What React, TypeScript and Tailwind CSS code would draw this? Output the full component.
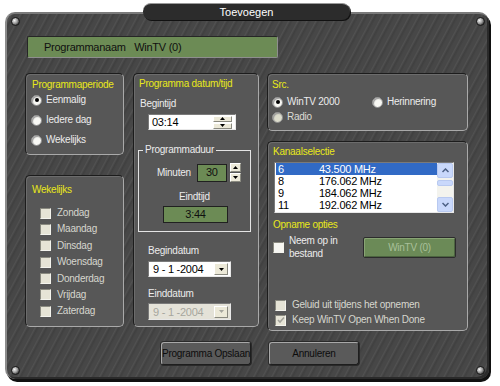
import type { ReactNode } from 'react';

const panel =
  'rounded-[5px] border border-t-[#1c1c1c] border-l-[#1c1c1c] border-r-[#a9a9a9] border-b-[#a9a9a9] bg-[#575757] shadow-[inset_1px_1px_0_#6c6c6c]';

const label = 'text-[#ececec] leading-[12px] whitespace-nowrap';
const title = 'text-[#e9e91a] leading-[12px] whitespace-nowrap';

function Screw({ className }: { className: string }) {
  return (
    <span
      className={`absolute h-[9px] w-[9px] rounded-full border border-[#1a1a1a] bg-[radial-gradient(circle_at_35%_35%,#f4f4f4_0px,#9a9a9a_3px,#3a3a3a_5px)] ${className}`}
    />
  );
}

function Radio({ text, checked, disabled }: { text: string; checked?: boolean; disabled?: boolean }) {
  return (
    <div className="flex h-[12px] items-center gap-[4px]">
      <span
        className={`flex h-[11px] w-[11px] items-center justify-center rounded-full border border-[#8e8e8e] shadow-[inset_1px_1px_1px_#9a9a9a] ${
          disabled ? 'bg-[#dcdccc]' : 'bg-[#f8f8f4]'
        }`}
      >
        {checked ? <span className="h-[4px] w-[4px] rounded-full bg-black" /> : null}
      </span>
      <span className={disabled ? 'leading-[12px] text-[#dcdcd4]' : label}>{text}</span>
    </div>
  );
}

function Check({ text, checked, disabled }: { text: ReactNode; checked?: boolean; disabled?: boolean }) {
  return (
    <div className="flex h-[12px] items-center gap-[6px]">
      <span className="flex h-[11px] w-[11px] shrink-0 items-center justify-center border border-t-[#8a8a80] border-l-[#8a8a80] border-r-[#f4f4ee] border-b-[#f4f4ee] bg-[#e6e4d6]">
        {checked ? (
          <svg width="8" height="8" viewBox="0 0 8 8">
            <path d="M1 4 L3 6 L7 1.5" fill="none" stroke="#a2a29a" strokeWidth="1.6" />
          </svg>
        ) : null}
      </span>
      <span className={`leading-[12px] whitespace-nowrap ${disabled ? 'text-[#d6d6ce]' : 'text-[#ececec]'}`}>
        {text}
      </span>
    </div>
  );
}

function Tri({ up, color = '#000' }: { up?: boolean; color?: string }) {
  return (
    <svg width="5" height="3" viewBox="0 0 5 3">
      <path d={up ? 'M0 3 L2.5 0 L5 3 Z' : 'M0 0 L5 0 L2.5 3 Z'} fill={color} />
    </svg>
  );
}

function SpinPair({ h }: { h: number }) {
  const btn =
    'flex flex-1 items-center justify-center border border-t-[#ffffff] border-l-[#ffffff] border-r-[#8a8a80] border-b-[#8a8a80] bg-[#ece9d8]';
  return (
    <div className="flex w-[11px] flex-col gap-[1px]" style={{ height: h }}>
      <span className={btn}>
        <Tri up />
      </span>
      <span className={btn}>
        <Tri />
      </span>
    </div>
  );
}

function Dropdown({ value, disabled, h }: { value: string; disabled?: boolean; h: string }) {
  return (
    <div
      className={`ml-[14px] flex w-[83px] items-center border border-t-[#7a7a7a] border-l-[#7a7a7a] border-r-[#e8e8e8] border-b-[#e8e8e8] pl-[4px] pr-[2px] ${h} ${
        disabled ? 'bg-[#e4e2d8] text-[#a6a69e]' : 'bg-white text-black'
      }`}
    >
      <span className="flex-1 text-[11px] leading-[12px]">{value}</span>
      <span className="flex h-[12px] w-[14px] items-center justify-center border border-t-[#ffffff] border-l-[#ffffff] border-r-[#8a8a80] border-b-[#8a8a80] bg-[#ece9d8]">
        <Tri color={disabled ? '#a6a69e' : '#000'} />
      </span>
    </div>
  );
}

const channels = [
  ['6', '43.500 MHz'],
  ['8', '176.062 MHz'],
  ['9', '184.062 MHz'],
  ['11', '192.062 MHz'],
];

const days = ['Zondag', 'Maandag', 'Dinsdag', 'Woensdag', 'Donderdag', 'Vrijdag', 'Zaterdag'];

export default function App() {
  return (
    <div className="relative h-[386px] w-[500px] overflow-hidden bg-white pl-[5px] pt-[12px] font-['Liberation_Sans',Arial,sans-serif] text-[10px] tracking-[-0.25px]">
      <div className="relative h-[367px] w-[484px] rounded-[10px] border-l-2 border-t-2 border-l-[#8c8c8c] border-t-[#7a7a7a] bg-[#464646] bg-[repeating-linear-gradient(118deg,#474747_0px,#474747_3px,#515151_4px,#404040_6px,#464646_8px)] pl-[18px] pt-[22px] shadow-[2px_3px_0_#111,inset_-2px_-2px_0_#2a2a2a]">
        <Screw className="left-[4px] top-[3px]" />
        <Screw className="left-[469px] top-[3px]" />
        <Screw className="left-[4px] top-[352px]" />
        <Screw className="left-[469px] top-[352px]" />

        {/* naam */}
        <div className="ml-[2px] flex h-[22px] w-[251px] items-center rounded-[2px] border border-t-[#262626] border-l-[#262626] border-r-[#8e8e8e] border-b-[#8e8e8e] bg-[#6c8b55] pl-[16px] text-[11px] text-[#101010]">
          Programmanaam&nbsp;&nbsp;&nbsp;WinTV (0)
        </div>

        <div className="mt-[15px] flex items-start">
          {/* links */}
          <div className="flex w-[99px] flex-col gap-[20px]">
            <div className={`${panel} h-[82px] pl-[5px] pt-[5px]`}>
              <div className={`${title} ml-[1px]`}>Programmaperiode</div>
              <div className="mt-[3px] flex flex-col gap-[8px]">
                <Radio text="Eenmalig" checked />
                <Radio text="Iedere dag" />
                <Radio text="Wekelijks" />
              </div>
            </div>
            <div className={`${panel} h-[152px] pl-[6px] pt-[8px]`}>
              <div className={title}>Wekelijks</div>
              <div className="ml-[8px] mt-[11px] flex flex-col gap-[4.4px]">
                {days.map((d) => (
                  <Check key={d} text={d} disabled />
                ))}
              </div>
            </div>
          </div>

          {/* midden */}
          <div className={`${panel} ml-[9px] h-[254px] w-[126px] pt-[4px]`}>
            <div className={`${title} ml-[5px]`}>Programma datum/tijd</div>
            <div className={`${label} ml-[6px] mt-[8px]`}>Begintijd</div>
            <div className="ml-[14px] mt-[4px] flex h-[16px] w-[88px] items-center border border-t-[#7a7a7a] border-l-[#7a7a7a] border-r-[#e8e8e8] border-b-[#e8e8e8] bg-white pl-[3px] pr-[3px]">
              <span className="flex-1 text-[11px] leading-[12px] text-black">03:14</span>
              <div className="flex h-[13px] w-[19px] flex-col gap-[1px]">
                <span className="flex flex-1 items-center justify-center border border-t-white border-l-white border-r-[#8a8a80] border-b-[#8a8a80] bg-[#ece9d8]">
                  <Tri up />
                </span>
                <span className="flex flex-1 items-center justify-center border border-t-white border-l-white border-r-[#8a8a80] border-b-[#8a8a80] bg-[#ece9d8]">
                  <Tri />
                </span>
              </div>
            </div>

            <fieldset className="ml-[4px] mt-[14px] h-[88px] w-[113px] border border-[#e4e4e4]">
              <legend className="ml-[4px] px-[2px] leading-[12px] text-[#ececec]">Programmaduur</legend>
              <div className="ml-[18px] mt-[7px] flex items-center">
                <span className={label}>Minuten</span>
                <span className="ml-[6px] flex h-[18px] w-[30px] items-center justify-center border border-[#202020] bg-[#6c8b55] text-[11px] text-[#101010]">
                  30
                </span>
                <span className="ml-[3px]">
                  <SpinPair h={19} />
                </span>
              </div>
              <div className={`${label} mt-[9px] text-center`}>Eindtijd</div>
              <div className="ml-[24px] mt-[3px] flex h-[17px] w-[65px] items-center justify-center border border-[#202020] bg-[#6c8b55] text-[11px] text-[#101010]">
                3:44
              </div>
            </fieldset>

            <div className={`${label} ml-[14px] mt-[13px]`}>Begindatum</div>
            <div className="mt-[4px]">
              <Dropdown value="9 - 1 -2004" h="h-[16px]" />
            </div>
            <div className={`${label} ml-[14px] mt-[11px]`}>Einddatum</div>
            <div className="mt-[3px]">
              <Dropdown value="9 - 1 -2004" h="h-[17px]" disabled />
            </div>
          </div>

          {/* rechts */}
          <div className="ml-[8px] flex w-[201px] flex-col gap-[10px]">
            <div className={`${panel} h-[58px] pl-[4px] pt-[5px]`}>
              <div className={`${title} ml-[0px]`}>Src.</div>
              <div className="mt-[5px] flex">
                <div className="w-[100px]">
                  <Radio text="WinTV 2000" checked />
                </div>
                <Radio text="Herinnering" />
              </div>
              <div className="mt-[3px]">
                <Radio text="Radio" disabled />
              </div>
            </div>

            <div className={`${panel} flex h-[190px] flex-col pl-[5px] pt-[4px]`}>
              <div className={title}>Kanaalselectie</div>
              <div className="ml-[1px] mt-[4px] flex h-[51px] w-[180px] border border-t-[#7a7a7a] border-l-[#7a7a7a] border-r-[#e8e8e8] border-b-[#e8e8e8] bg-white">
                <div className="flex-1 pl-[1px] text-[11px] text-black">
                  {channels.map(([n, f], i) => (
                    <div
                      key={n}
                      className={`flex h-[12px] items-center leading-[12px] ${
                        i === 0 ? 'bg-[#316ac5] text-white' : ''
                      }`}
                    >
                      <span className="w-[43px] pl-[2px]">{n}</span>
                      <span>{f}</span>
                    </div>
                  ))}
                </div>
                <div className="flex w-[16px] flex-col bg-[#f3f3ee]">
                  <span className="flex h-[15px] items-center justify-center rounded-[2px] border border-[#b8c9f0] bg-[#c9d8fb]">
                    <svg width="7" height="5" viewBox="0 0 7 5">
                      <path d="M0.5 4 L3.5 1 L6.5 4" fill="none" stroke="#4d6185" strokeWidth="1.5" />
                    </svg>
                  </span>
                  <span className="mt-[2px] h-[6px] rounded-[2px] border border-[#b8c9f0] bg-[#c9d8fb]" />
                  <span className="flex-1" />
                  <span className="flex h-[15px] items-center justify-center rounded-[2px] border border-[#b8c9f0] bg-[#c9d8fb]">
                    <svg width="7" height="5" viewBox="0 0 7 5">
                      <path d="M0.5 1 L3.5 4 L6.5 1" fill="none" stroke="#4d6185" strokeWidth="1.5" />
                    </svg>
                  </span>
                </div>
              </div>

              <div className={`${title} mt-[6px]`}>Opname opties</div>
              <div className="mt-[3px] flex items-start">
                <div className="mt-[8px] flex h-[11px] w-[11px] border border-t-[#8a8a80] border-l-[#8a8a80] border-r-[#f4f4ee] border-b-[#f4f4ee] bg-[#f6f6f2]" />
                <div className="ml-[5px] w-[74px] text-[#ececec] leading-[13px]">
                  Neem op in
                  <br />
                  bestand
                </div>
                <div className="mt-[3px] flex h-[21px] w-[93px] items-center justify-center rounded-[2px] border border-[#2c2c2c] bg-[#6b8a57] text-[#a9c09a] shadow-[inset_1px_1px_0_#88a474,inset_-1px_-1px_0_#4c6440]">
                  WinTV (0)
                </div>
              </div>

              <div className="mb-[4px] ml-[2px] mt-auto flex flex-col gap-[3px]">
                <Check text="Geluid uit tijdens het opnemen" disabled />
                <Check text="Keep WinTV Open When Done" checked disabled />
              </div>
            </div>
          </div>
        </div>

        {/* knoppen */}
        <div className="ml-[136px] mt-[11px] flex gap-[18px]">
          <button className="flex h-[23px] w-[90px] items-center justify-center rounded-[3px] border border-t-[#a8a8a8] border-l-[#a8a8a8] border-r-[#1e1e1e] border-b-[#1e1e1e] bg-[#5a5a5a] text-[10px] tracking-[-0.25px] text-[#0c0c0c] shadow-[0_0_0_1px_#2a2a2a]">
            Programma Opslaan
          </button>
          <button className="flex h-[23px] w-[90px] items-center justify-center rounded-[3px] border border-t-[#a8a8a8] border-l-[#a8a8a8] border-r-[#1e1e1e] border-b-[#1e1e1e] bg-[#5a5a5a] text-[10px] tracking-[-0.25px] text-[#0c0c0c] shadow-[0_0_0_1px_#2a2a2a]">
            Annuleren
          </button>
        </div>
      </div>

      {/* titel */}
      <div className="absolute left-[143px] top-[3px] flex h-[17px] w-[207px] items-center justify-center rounded-[8px] border-t border-t-[#9a9a9a] bg-[#2c2c2c] text-[11px] tracking-normal text-white shadow-[1px_1px_0_#111]">
        Toevoegen
      </div>
    </div>
  );
}
